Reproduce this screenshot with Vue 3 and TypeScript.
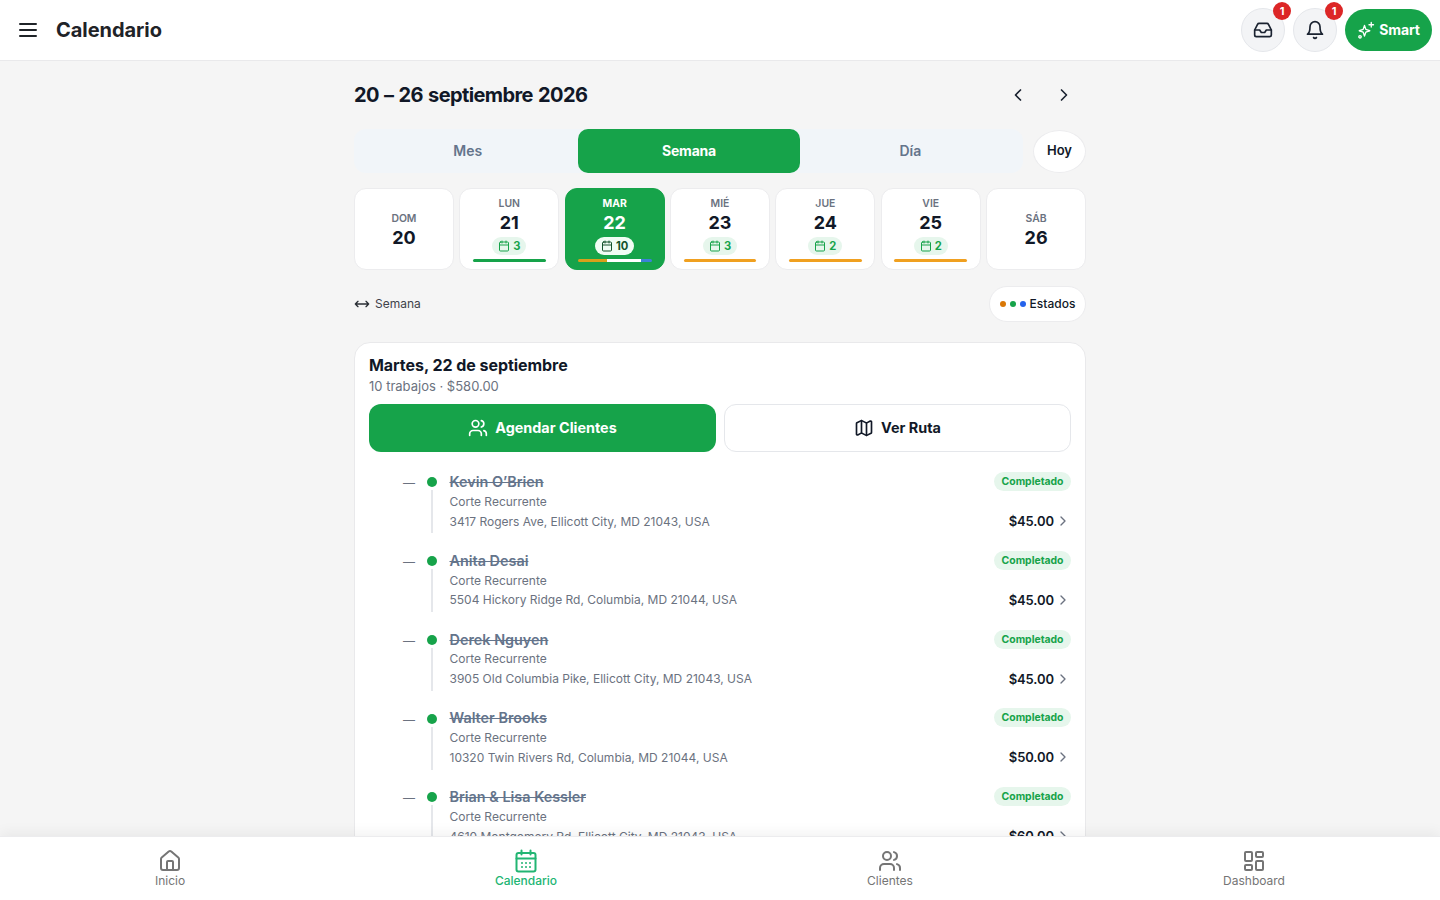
<script setup lang="ts">
interface Day { label: string; num: number; count?: number; bar?: string; active?: boolean }
interface Job { name: string; address: string; price: string }

const days: Day[] = [
  { label: 'DOM', num: 20 },
  { label: 'LUN', num: 21, count: 3, bar: 'green' },
  { label: 'MAR', num: 22, count: 10, active: true },
  { label: 'MIÉ', num: 23, count: 3, bar: 'amber' },
  { label: 'JUE', num: 24, count: 2, bar: 'amber' },
  { label: 'VIE', num: 25, count: 2, bar: 'amber' },
  { label: 'SÁB', num: 26 },
]

const jobs: Job[] = [
  { name: 'Kevin O’Brien', address: '3417 Rogers Ave, Ellicott City, MD 21043, USA', price: '$45.00' },
  { name: 'Anita Desai', address: '5504 Hickory Ridge Rd, Columbia, MD 21044, USA', price: '$45.00' },
  { name: 'Derek Nguyen', address: '3905 Old Columbia Pike, Ellicott City, MD 21043, USA', price: '$45.00' },
  { name: 'Walter Brooks', address: '10320 Twin Rivers Rd, Columbia, MD 21044, USA', price: '$50.00' },
  { name: 'Brian & Lisa Kessler', address: '4610 Montgomery Rd, Ellicott City, MD 21043, USA', price: '$60.00' },
]
</script>

<template>
  <div class="page">
    <header class="topbar">
      <div class="top-left">
        <svg class="menu" width="24" height="24" viewBox="0 0 24 24" fill="none" stroke="#1f2328" stroke-width="2" stroke-linecap="round"><path d="M4 6h16M4 12h16M4 18h16"/></svg>
        <h1>Calendario</h1>
      </div>
      <div class="top-right">
        <button class="round">
          <svg width="20" height="20" viewBox="0 0 24 24" fill="none" stroke="#1a2230" stroke-width="2" stroke-linecap="round" stroke-linejoin="round"><path d="M22 12h-6l-2 3h-4l-2-3H2"/><path d="M5.45 5.11 2 12v6a2 2 0 0 0 2 2h16a2 2 0 0 0 2-2v-6l-3.45-6.89A2 2 0 0 0 16.76 4H7.24a2 2 0 0 0-1.79 1.11z"/></svg>
          <span class="badge">1</span>
        </button>
        <button class="round">
          <svg width="20" height="20" viewBox="0 0 24 24" fill="none" stroke="#1a2230" stroke-width="2" stroke-linecap="round" stroke-linejoin="round"><path d="M6 8a6 6 0 0 1 12 0c0 7 3 9 3 9H3s3-2 3-9"/><path d="M10.3 21a1.94 1.94 0 0 0 3.4 0"/></svg>
          <span class="badge">1</span>
        </button>
        <button class="smart">
          <svg width="18" height="18" viewBox="0 0 24 24" fill="none" stroke="#fff" stroke-width="1.8" stroke-linecap="round" stroke-linejoin="round"><path d="M10 6l1.8 5.2L17 13l-5.2 1.8L10 20l-1.8-5.2L3 13l5.2-1.8z"/><path d="M19 2v6M16 5h6"/><circle cx="4" cy="21" r="1.6"/></svg>
          Smart
        </button>
      </div>
    </header>

    <main class="main">
      <div class="col">
        <div class="range-row">
          <h2>20 – 26 septiembre 2026</h2>
          <div class="arrows">
            <svg width="20" height="20" viewBox="0 0 24 24" fill="none" stroke="#1a2230" stroke-width="2" stroke-linecap="round" stroke-linejoin="round"><path d="m15 18-6-6 6-6"/></svg>
            <svg width="20" height="20" viewBox="0 0 24 24" fill="none" stroke="#1a2230" stroke-width="2" stroke-linecap="round" stroke-linejoin="round"><path d="m9 18 6-6-6-6"/></svg>
          </div>
        </div>

        <div class="tabs-row">
          <div class="tabs">
            <div class="tab">Mes</div>
            <div class="tab on">Semana</div>
            <div class="tab">Día</div>
          </div>
          <button class="hoy">Hoy</button>
        </div>

        <div class="days">
          <div v-for="d in days" :key="d.num" class="day" :class="{ active: d.active, empty: !d.count }">
            <span class="d-label">{{ d.label }}</span>
            <span class="d-num">{{ d.num }}</span>
            <span v-if="d.count" class="d-pill">
              <svg width="12" height="12" viewBox="0 0 24 24" fill="none" stroke="currentColor" stroke-width="2" stroke-linecap="round" stroke-linejoin="round"><rect x="3" y="4" width="18" height="18" rx="2"/><path d="M16 2v4M8 2v4M3 10h18"/></svg>
              {{ d.count }}
            </span>
            <span v-if="d.bar" class="d-bar" :class="d.bar"></span>
            <span v-if="d.active" class="d-bar multi"><i class="s1"></i><i class="s2"></i><i class="s3"></i></span>
          </div>
        </div>

        <div class="legend-row">
          <div class="week">
            <svg width="16" height="16" viewBox="0 0 24 24" fill="none" stroke="#2a2e35" stroke-width="2" stroke-linecap="round" stroke-linejoin="round"><path d="M2 12h20M6 8l-4 4 4 4M18 8l4 4-4 4"/></svg>
            Semana
          </div>
          <button class="estados">
            <i class="dot orange"></i><i class="dot green"></i><i class="dot blue"></i>
            <span class="est-text">Estados</span>
          </button>
        </div>

        <section class="card">
          <h3>Martes, 22 de septiembre</h3>
          <p class="sum">10 trabajos · $580.00</p>
          <div class="actions">
            <button class="btn primary">
              <svg width="20" height="20" viewBox="0 0 24 24" fill="none" stroke="currentColor" stroke-width="2" stroke-linecap="round" stroke-linejoin="round"><path d="M16 21v-2a4 4 0 0 0-4-4H6a4 4 0 0 0-4 4v2"/><circle cx="9" cy="7" r="4"/><path d="M22 21v-2a4 4 0 0 0-3-3.87M16 3.13a4 4 0 0 1 0 7.75"/></svg>
              Agendar Clientes
            </button>
            <button class="btn ghost">
              <svg width="20" height="20" viewBox="0 0 24 24" fill="none" stroke="currentColor" stroke-width="2" stroke-linecap="round" stroke-linejoin="round"><path d="M14.1 5.55a2 2 0 0 0 1.8 0l3.66-1.83A1 1 0 0 1 21 4.62v12.76a1 1 0 0 1-.55.9l-4.55 2.27a2 2 0 0 1-1.8 0l-4.2-2.1a2 2 0 0 0-1.8 0l-3.66 1.83A1 1 0 0 1 3 19.38V6.62a1 1 0 0 1 .55-.9L8.1 3.45a2 2 0 0 1 1.8 0z"/><path d="M15 5.76v15M9 3.24v15"/></svg>
              Ver Ruta
            </button>
          </div>

          <ul class="jobs">
            <li v-for="j in jobs" :key="j.name" class="job">
              <span class="dash">—</span>
              <div class="rail"><i class="rail-dot"></i><i class="rail-line"></i></div>
              <div class="info">
                <div class="line1">
                  <span class="name">{{ j.name }}</span>
                  <span class="status">Completado</span>
                </div>
                <div class="svc">Corte Recurrente</div>
                <div class="line3">
                  <span class="addr">{{ j.address }}</span>
                  <span class="price">
                    {{ j.price }}
                    <svg width="16" height="16" viewBox="0 0 24 24" fill="none" stroke="#6b7280" stroke-width="2" stroke-linecap="round" stroke-linejoin="round"><path d="m9 18 6-6-6-6"/></svg>
                  </span>
                </div>
              </div>
            </li>
          </ul>
        </section>
      </div>
    </main>

    <nav class="bottom">
      <div class="nav-item">
        <svg width="24" height="24" viewBox="0 0 24 24" fill="none" stroke="currentColor" stroke-width="2" stroke-linecap="round" stroke-linejoin="round"><path d="M15 21v-8a1 1 0 0 0-1-1h-4a1 1 0 0 0-1 1v8"/><path d="M3 10a2 2 0 0 1 .71-1.53l7-6a2 2 0 0 1 2.58 0l7 6A2 2 0 0 1 21 10v9a2 2 0 0 1-2 2H5a2 2 0 0 1-2-2z"/></svg>
        <span>Inicio</span>
      </div>
      <div class="nav-item on">
        <svg width="24" height="24" viewBox="0 0 24 24" fill="none" stroke="currentColor" stroke-width="2" stroke-linecap="round" stroke-linejoin="round"><rect x="2.5" y="4" width="19" height="18.5" rx="2"/><path d="M7.5 1.5v4M16.5 1.5v4M2.5 9.5h19"/><path d="M8 14h.01M12 14h.01M16 14h.01M8 18h.01M12 18h.01M16 18h.01"/></svg>
        <span>Calendario</span>
      </div>
      <div class="nav-item">
        <svg width="24" height="24" viewBox="0 0 24 24" fill="none" stroke="currentColor" stroke-width="2" stroke-linecap="round" stroke-linejoin="round"><path d="M16 21v-2a4 4 0 0 0-4-4H6a4 4 0 0 0-4 4v2"/><circle cx="9" cy="7" r="4"/><path d="M22 21v-2a4 4 0 0 0-3-3.87M16 3.13a4 4 0 0 1 0 7.75"/></svg>
        <span>Clientes</span>
      </div>
      <div class="nav-item">
        <svg width="24" height="24" viewBox="0 0 24 24" fill="none" stroke="currentColor" stroke-width="2" stroke-linecap="round" stroke-linejoin="round"><rect x="3" y="3" width="7" height="9" rx="1"/><rect x="14" y="3" width="7" height="5" rx="1"/><rect x="14" y="12" width="7" height="9" rx="1"/><rect x="3" y="16" width="7" height="5" rx="1"/></svg>
        <span>Dashboard</span>
      </div>
    </nav>
  </div>
</template>

<style>
html, body { margin: 0; overflow: hidden; }
</style>

<style scoped>
* { box-sizing: border-box; }
.page {
  height: 900px;
  display: flex;
  flex-direction: column;
  background: #f5f5f5;
  font-family: Inter, "Liberation Sans", sans-serif;
  color: #111827;
  overflow: hidden;
}
button { font-family: inherit; cursor: pointer; }
.topbar {
  height: 61px;
  flex: none;
  background: #fff;
  border-bottom: 1px solid #e9e9eb;
  display: flex;
  align-items: center;
  justify-content: space-between;
  padding: 0 8px 0 16px;
}
.top-left { display: flex; align-items: center; gap: 16px; }
.menu { display: block; }
h1 { margin: 0; font-size: 20px; line-height: 28px; font-weight: 700; letter-spacing: -0.05px; color: #1f2328; }
.top-right { display: flex; align-items: center; gap: 8px; }
.round {
  position: relative;
  width: 44px;
  height: 44px;
  border-radius: 50%;
  border: 1px solid #e5e7eb;
  background: #f3f4f6;
  display: flex;
  align-items: center;
  justify-content: center;
  padding: 0;
}
.badge {
  position: absolute;
  top: -7px;
  right: -7px;
  width: 18px;
  height: 18px;
  border-radius: 50%;
  background: #dc2626;
  color: #fff;
  font-size: 11px;
  font-weight: 700;
  line-height: 18px;
  text-align: center;
}
.smart {
  height: 42px;
  width: 87px;
  border: 0;
  border-radius: 21px;
  background: #16a34a;
  color: #fff;
  font-size: 14px;
  font-weight: 700;
  letter-spacing: -0.1px;
  display: flex;
  align-items: center;
  justify-content: center;
  gap: 4px;
  padding: 0 0 1px;
}
.main { flex: 1; min-height: 0; overflow: hidden; position: relative; }
.col { width: 732px; margin: 0 auto; }
.range-row {
  height: 68px;
  padding-bottom: 1px;
  display: flex;
  align-items: center;
  justify-content: space-between;
}
h2 { margin: 0; font-size: 20px; line-height: 28px; font-weight: 700; letter-spacing: -0.6px; word-spacing: 1px; color: #111827; }
.arrows { display: flex; gap: 26px; padding-right: 12px; padding-top: 1px; }
.arrows svg { display: block; }
.tabs-row { display: flex; align-items: flex-start; gap: 10px; }
.tabs {
  flex: 1;
  height: 44px;
  background: #f1f5f9;
  border-radius: 12px;
  display: grid;
  grid-template-columns: repeat(3, 1fr);
  padding: 0 2px 0 3px;
}
.tab {
  display: flex;
  align-items: center;
  justify-content: center;
  font-size: 14px;
  font-weight: 600;
  color: #64748b;
  border-radius: 10px;
  padding-bottom: 1px;
}
.tab.on { background: #16a34a; color: #fff; font-weight: 700; letter-spacing: -0.2px; }
.hoy {
  width: 53px;
  height: 43px;
  margin-top: 1px;
  border-radius: 50%;
  border: 1px solid #ececee;
  background: #fff;
  font-size: 13px;
  font-weight: 600;
  color: #111827;
  padding: 0 0 4px;
}
.days {
  display: grid;
  grid-template-columns: repeat(7, 1fr);
  gap: 5.5px;
  margin-top: 15px;
}
.day {
  height: 82px;
  background: #fff;
  border: 1px solid #ececee;
  border-radius: 12px;
  display: flex;
  flex-direction: column;
  align-items: center;
  justify-content: center;
  padding-top: 1px;
}
.day.empty { padding-top: 5px; }
.day.active { background: #16a34a; border-color: #16a34a; }
.d-label { font-size: 10.4px; line-height: 14px; font-weight: 600; color: #6b7280; }
.d-num { font-size: 18px; line-height: 26px; font-weight: 700; color: #111827; margin-top: -1px; }
.active .d-label, .active .d-num { color: #fff; font-weight: 700; }
.d-pill {
  display: inline-flex;
  align-items: center;
  gap: 3px;
  height: 18px;
  padding: 0 6px;
  border-radius: 9px;
  background: #e6f6ec;
  color: #16a34a;
  font-size: 11.2px;
  font-weight: 700;
  margin-top: 1px;
}
.active .d-pill { background: #f0fdf4; color: #14532d; padding: 0 6px; }
.d-bar {
  align-self: stretch;
  margin: 4px 12.5px 0;
  height: 3px;
  border-radius: 2px;
  display: flex;
  overflow: hidden;
  flex: none;
}
.d-bar.multi { margin-left: 12px; margin-right: 12px; }
.d-bar.green { background: #16a34a; }
.d-bar.amber { background: #f0a020; }
.d-bar i { display: block; height: 100%; }
.s1 { width: 39%; background: #d8a01a; }
.s2 { width: 47%; background: #fff; }
.s3 { width: 14%; background: #3b82d6; }
.legend-row {
  display: flex;
  align-items: center;
  justify-content: space-between;
  margin-top: 16px;
  height: 36px;
}
.week { display: flex; align-items: center; gap: 5px; font-size: 12px; color: #3f434a; padding-bottom: 1px; }
.estados {
  height: 36px;
  width: 97px;
  border-radius: 18px;
  border: 1px solid #ececee;
  background: #fff;
  display: flex;
  align-items: center;
  justify-content: center;
  gap: 4px;
  font-size: 12px;
  font-weight: 500;
  color: #111827;
  padding: 0;
}
.est-text { position: relative; top: -1px; }
.dot { width: 6px; height: 6px; border-radius: 50%; display: block; }
.dot.orange { background: #d97706; }
.dot.green { background: #16a34a; }
.dot.blue { background: #2563eb; }
.card {
  margin-top: 20px;
  background: #fff;
  border: 1px solid #e9e9eb;
  border-radius: 16px;
  padding: 12px 14px 0;
}
h3 { margin: 0; font-size: 16px; line-height: 20px; font-weight: 700; letter-spacing: -0.05px; color: #111827; }
.sum { margin: 2px 0 0; font-size: 13px; line-height: 18px; color: #6b7280; }
.actions { display: grid; grid-template-columns: 1fr 1fr; gap: 8px; margin-top: 9px; }
.btn {
  height: 48px;
  border-radius: 12px;
  display: flex;
  align-items: center;
  justify-content: center;
  gap: 7px;
  font-size: 14.4px;
  font-weight: 700;
  padding: 0 0 1px;
}
.primary { background: #16a34a; border: 0; color: #fff; }
.ghost { background: #fff; border: 1px solid #e5e7eb; color: #111827; }
.jobs { list-style: none; margin: 19.3px 0 0; padding: 0 0 0 34px; }
.job { display: flex; height: 78.75px; }
.dash { width: 24px; font-size: 12px; line-height: 24px; color: #6b7280; flex: none; }
.rail { width: 22.5px; flex: none; position: relative; }
.rail-dot {
  position: absolute;
  left: 0;
  top: 6px;
  width: 10px;
  height: 10px;
  border-radius: 50%;
  background: #16a34a;
}
.rail-line {
  position: absolute;
  left: 4px;
  top: 19px;
  width: 2px;
  height: 43px;
  background: #e5e7eb;
}
.info { flex: 1; min-width: 0; }
.line1, .line3 { display: flex; align-items: center; justify-content: space-between; }
.line1 { height: 20.5px; }
.name { font-size: 14.4px; font-weight: 600; color: #64748b; text-decoration: line-through; }
.status {
  height: 19px;
  padding: 0 7.5px;
  border-radius: 10px;
  background: #e6f6ec;
  color: #16a34a;
  font-size: 10.4px;
  font-weight: 700;
  line-height: 19px;
}
.svc { font-size: 12px; line-height: 20px; color: #6b7280; }
.line3 { height: 20px; margin-top: -0.7px; }
.addr { font-size: 12px; color: #6b7280; }
.price { display: flex; align-items: center; gap: 1px; font-size: 13px; font-weight: 600; letter-spacing: -0.1px; color: #111827; }
.bottom {
  height: 64px;
  flex: none;
  background: #fff;
  border-top: 1px solid #ececee;
  box-shadow: 0 -4px 12px rgba(0, 0, 0, 0.05);
  display: grid;
  grid-template-columns: 340px 372px 356px 372px;
  position: relative;
}
.nav-item {
  display: flex;
  flex-direction: column;
  align-items: center;
  padding-top: 12px;
  color: #757575;
  font-size: 12px;
  line-height: 16px;
}
.nav-item.on { color: #22b573; font-weight: 500; }
</style>
